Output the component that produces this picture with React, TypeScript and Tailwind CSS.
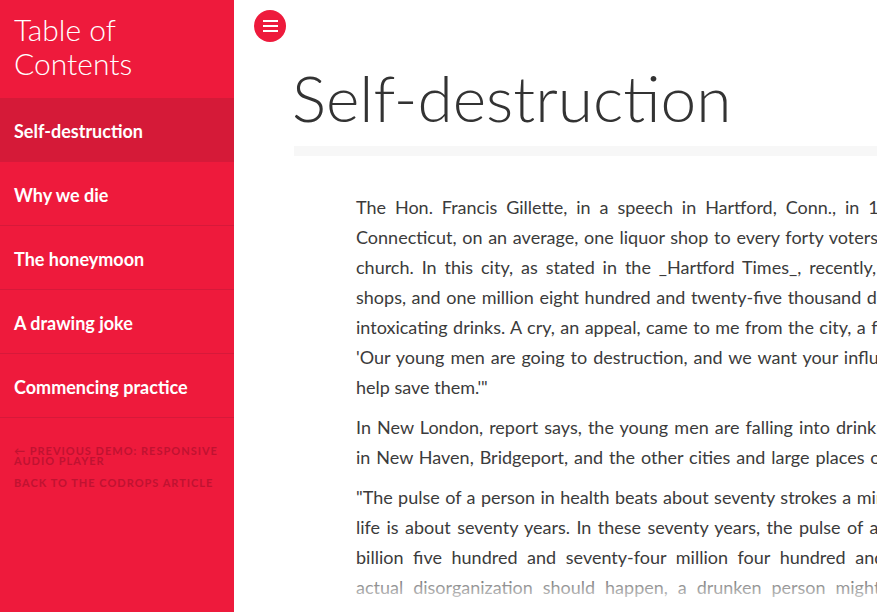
import React from "react";

const items = [
  "Self-destruction",
  "Why we die",
  "The honeymoon",
  "A drawing joke",
  "Commencing practice",
];

type Line = [string, string];

const paras: Line[][] = [
  [
    ["The Hon. Francis Gillette, in a speech in Hartford, Conn., in 1871, said that there were in", "[word-spacing:4.3px]"],
    ["Connecticut, on an average, one liquor shop to every forty voters, and three to every", "[word-spacing:1.1px]"],
    ["church. In this city, as stated in the _Hartford Times_, recently, there are four hundred", "[word-spacing:3.3px]"],
    ["shops, and one million eight hundred and twenty-five thousand dollars are spent for", "[word-spacing:1px]"],
    ["intoxicating drinks. A cry, an appeal, came to me from the city, a few days since, saying:", "[word-spacing:0.8px]"],
    ["'Our young men are going to destruction, and we want your influence, counsel and prayers to", "[word-spacing:1.4px]"],
    ["help save them.'\"", ""],
  ],
  [
    ["In New London, report says, the young men are falling into drinking habits as never before; and", "[word-spacing:1.5px]"],
    ["in New Haven, Bridgeport, and the other cities and large places of the State, it is the same.", "[word-spacing:1.3px]"],
  ],
  [
    ["\"The pulse of a person in health beats about seventy strokes a minute, and the ordinary term of", "[word-spacing:0.8px]"],
    ["life is about seventy years. In these seventy years, the pulse of a man beats two", "[word-spacing:1.8px]"],
    ["billion five hundred and seventy-four million four hundred and forty thousand times. If no", "[word-spacing:5px]"],
    ["actual disorganization should happen, a drunken person might live as long as a sober one.", "[word-spacing:5.3px]"],
  ],
];

export default function App() {
  return (
    <div className="flex h-[612px] w-[877px] overflow-hidden bg-white font-['Lato','Open_Sans',sans-serif]">
      <aside className="flex w-[234px] shrink-0 flex-col bg-[#ee1a3c]">
        <h2 className="h-[98px] px-[14px] pt-[12px] text-[30px] font-light leading-[34px] text-white">
          Table of Contents
        </h2>
        <nav className="flex flex-col">
          {items.map((t, i) => (
            <a
              key={t}
              className={
                "flex h-[64px] items-center border-b border-[#d6193a] px-[14px] pt-[3px] text-[18px] font-bold text-white " +
                (i === 0 ? "bg-[#d51a38]" : "")
              }
            >
              {t}
            </a>
          ))}
        </nav>
        <div className="flex flex-col gap-[12px] px-[14px] pt-[28px] text-[11px] font-bold uppercase leading-[10px] tracking-[1px] text-[#c01231]">
          <a>← Previous Demo: Responsive Audio Player</a>
          <a>Back to the Codrops Article</a>
        </div>
      </aside>
      <main className="relative flex-1 overflow-hidden">
        <div className="pl-[20px] pt-[10px]">
          <button className="flex h-[32px] w-[32px] flex-col items-center justify-center gap-[3px] rounded-full bg-[#ee1a3c]">
            <span className="block h-[2px] w-[15px] bg-white" />
            <span className="block h-[2px] w-[15px] bg-white" />
            <span className="block h-[2px] w-[15px] bg-white" />
          </button>
        </div>
        <div className="w-[800px] pl-[60px]">
          <h1 className="ml-[-2px] pt-[23px] text-[64px] font-light leading-[65px] whitespace-nowrap text-[#333]">
            Self-destruction
          </h1>
          <div className="mt-[16px] h-[10px] w-[800px] bg-[#f7f7f7]" />
          <div className="ml-[62px] mt-[36px] text-[18px] leading-[30px] text-[#3b3b3b]">
            {paras.map((lines, pi) => (
              <div key={pi} className={pi < paras.length - 1 ? "mb-[10px]" : ""}>
                {lines.map(([l, ws], li) => (
                  <div key={li} className={"whitespace-nowrap " + ws}>
                    {l}
                  </div>
                ))}
              </div>
            ))}
          </div>
        </div>
        <div className="pointer-events-none absolute bottom-0 left-0 right-0 h-[48px] bg-gradient-to-b from-white/0 to-white" />
      </main>
    </div>
  );
}
